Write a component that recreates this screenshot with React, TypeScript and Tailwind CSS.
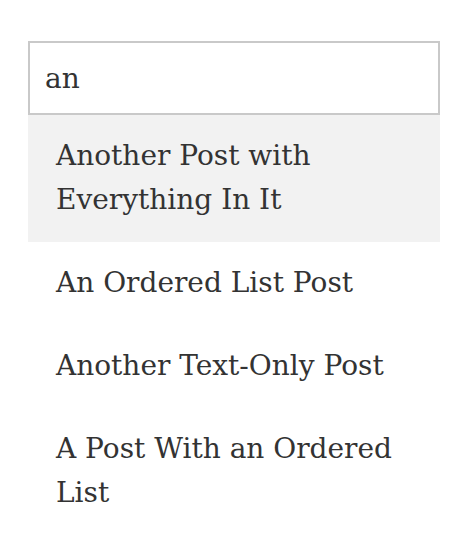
import { useState } from 'react'

const results = [
  'Another Post with Everything In It',
  'An Ordered List Post',
  'Another Text-Only Post',
  'A Post With an Ordered List',
]

export default function App() {
  const [query, setQuery] = useState('an')
  const [active, setActive] = useState(0)

  return (
    <div className="min-h-screen bg-white pt-[41px] pl-[28px] font-['DejaVu_Serif',serif] text-[#333]">
      <div className="w-[412px]">
        <input
          value={query}
          onChange={(e) => setQuery(e.target.value)}
          className="block h-[74px] w-full border-2 border-[#c9c9c9] bg-white px-[15px] text-[28px] text-[#333] outline-none"
        />
        <ul>
          {results.map((title, i) => (
            <li
              key={title}
              onMouseEnter={() => setActive(i)}
              className={
                'cursor-pointer pt-[19px] pb-[20px] pl-[28px] pr-[30px] text-[28px] leading-[44px] ' +
                (active === i ? 'bg-[#f2f2f2]' : '')
              }
            >
              {title}
            </li>
          ))}
        </ul>
      </div>
    </div>
  )
}
